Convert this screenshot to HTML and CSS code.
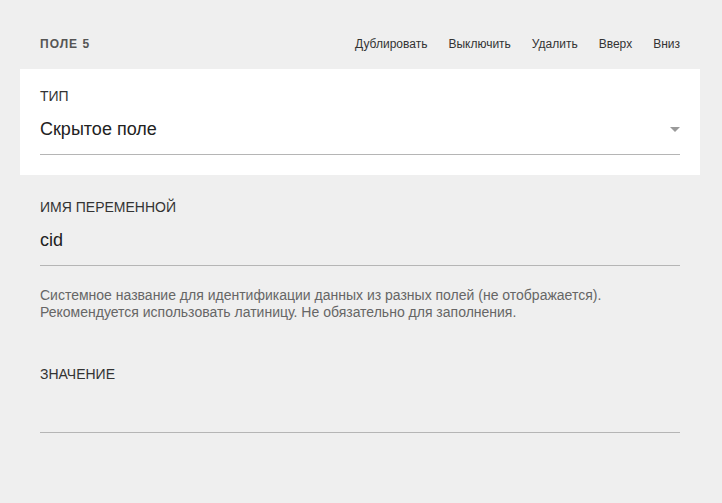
FILE: index.html
```html
<!DOCTYPE html>
<html lang="ru">
<head>
<meta charset="utf-8">
<title>Поле 5</title>
<link rel="stylesheet" href="styles.css">
</head>
<body>
<div class="page">
  <div class="header">
    <div class="title">ПОЛЕ 5</div>
    <div class="actions">
      <span class="action">Дублировать</span>
      <span class="action">Выключить</span>
      <span class="action">Удалить</span>
      <span class="action">Вверх</span>
      <span class="action">Вниз</span>
    </div>
  </div>
  <div class="panel">
    <div class="label">ТИП</div>
    <div class="input select">
      <span class="value">Скрытое поле</span>
      <svg class="arrow" width="10" height="5" viewBox="0 0 10 5"><path d="M0 0H10L5 5Z" fill="#9a9a9a"/></svg>
    </div>
  </div>
  <div class="section">
    <div class="label">ИМЯ ПЕРЕМЕННОЙ</div>
    <div class="input"><span class="value">cid</span></div>
    <p class="help">Системное название для идентификации данных из разных полей (не отображается).<br>Рекомендуется использовать латиницу. Не обязательно для заполнения.</p>
  </div>
  <div class="section">
    <div class="label">ЗНАЧЕНИЕ</div>
    <div class="input"><span class="value"></span></div>
  </div>
</div>
</body>
</html>
```

FILE: styles.css
```css
html, body {
  margin: 0;
  padding: 0;
  background: #efefef;
}
body {
  font-family: "Liberation Sans", Arial, sans-serif;
  color: #222;
}
.page {
  padding: 0 20px;
  margin-right: 2px;
}
.header {
  display: flex;
  justify-content: space-between;
  align-items: center;
  padding: 36px 20px 17px;
  line-height: 16px;
}
.title {
  font-size: 12px;
  font-weight: bold;
  letter-spacing: 1px;
  color: #555;
}
.actions {
  display: flex;
  gap: 21px;
  font-size: 12px;
  color: #333;
}
.panel {
  background: #fff;
  padding: 19px 20px 20px;
}
.section {
  padding: 24px 20px 0;
}
.label {
  font-size: 14px;
  line-height: 16px;
  color: #333;
}
.input {
  display: flex;
  align-items: center;
  justify-content: space-between;
  margin-top: 13px;
  padding-bottom: 13px;
  border-bottom: 1px solid #b5b5b5;
  font-size: 18px;
  line-height: 24px;
  height: 24px;
  color: #222;
}
.arrow {
  display: block;
}
.help {
  margin: 21px 0 21px;
  font-size: 14px;
  line-height: 17px;
  color: #666;
}
```
